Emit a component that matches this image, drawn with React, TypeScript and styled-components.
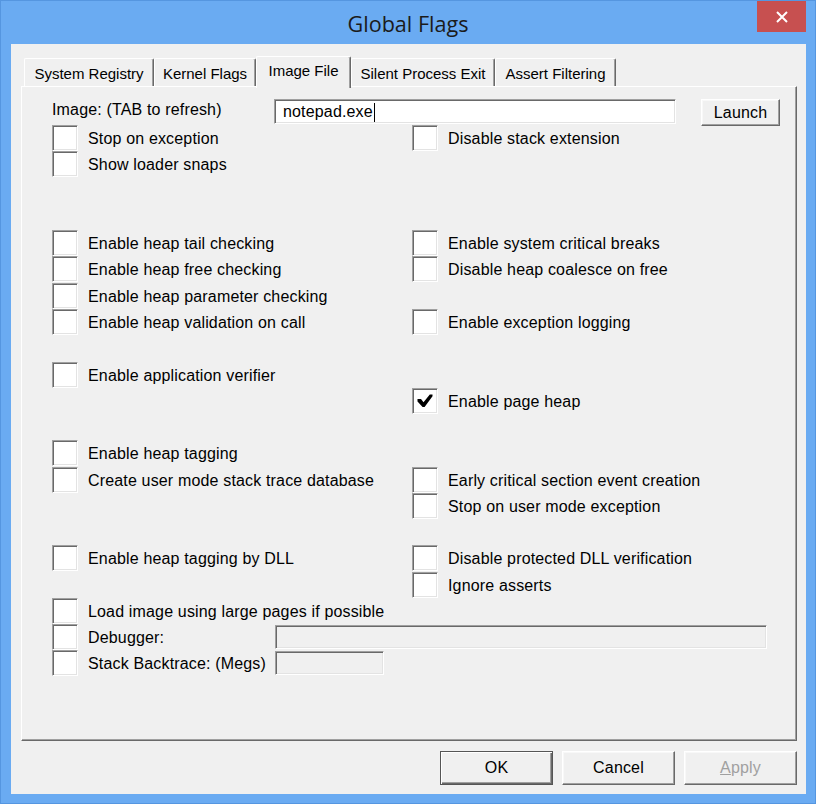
import React from "react";
import styled, { createGlobalStyle, css } from "styled-components";

const GlobalStyle = createGlobalStyle`
  html, body { margin: 0; padding: 0; background: #6aabf2; }
  * { box-sizing: border-box; }
`;

const Window = styled.div`
  width: 816px;
  height: 804px;
  background: #6aabf2;
  border: 1px solid #5596e0;
  display: flex;
  flex-direction: column;
  font-family: "Liberation Sans", Arial, sans-serif;
  font-size: 16px;
  letter-spacing: 0.16px;
  color: #000;
`;

const TitleBar = styled.div`
  height: 43px;
  display: grid;
  grid-template-columns: 1fr auto 1fr;
  align-items: start;
`;

const Title = styled.div`
  grid-column: 2;
  font-family: "Open Sans", "Noto Sans", sans-serif;
  font-size: 21.6px;
  letter-spacing: 0;
  color: #1b1b1b;
  line-height: 43px;
  padding-top: 1px;
`;

const CloseButton = styled.div`
  grid-column: 3;
  justify-self: end;
  margin-right: 9px;
  width: 49px;
  height: 31px;
  background: #c75050;
  display: flex;
  align-items: center;
  justify-content: center;
`;

const Client = styled.div`
  margin: 0 9px 0 10px;
  height: 750px;
  background: #f0f0f0;
  padding: 12px 9px 0 10px;
  display: flex;
  flex-direction: column;
`;

const TabStrip = styled.div`
  height: 30px;
  display: flex;
  align-items: flex-end;
  padding-left: 3px;
  position: relative;
  z-index: 1;
`;

const Tab = styled.div<{ $w: number; $active?: boolean }>`
  width: ${(p) => p.$w}px;
  height: 28px;
  background: #f0f0f0;
  border-top: 1px solid #fff;
  border-left: 1px solid #fff;
  border-right: 1px solid #696969;
  box-shadow: inset -1px 0 #a0a0a0;
  border-top-left-radius: 2px;
  border-top-right-radius: 2px;
  display: flex;
  align-items: center;
  justify-content: center;
  white-space: nowrap;
  font-size: 15px;
  letter-spacing: 0;
  padding-top: 1px;
  ${(p) =>
    p.$active &&
    css`
      height: 32px;
      margin-bottom: -2px;
      padding-top: 0;
      padding-bottom: 4px;
    `}
`;

const Panel = styled.div`
  height: 655px;
  border-top: 1px solid #fff;
  border-left: 1px solid #fff;
  border-right: 1px solid #696969;
  border-bottom: 1px solid #696969;
  box-shadow: inset -1px -1px #a0a0a0;
  padding: 12px 0 0 30px;
  display: flex;
  flex-direction: column;
`;

const ImageRow = styled.div`
  height: 26px;
  display: flex;
  align-items: flex-start;
`;

const ImageLabel = styled.div`
  width: 222px;
  margin-top: 2px;
  white-space: nowrap;
`;

const sunken = css`
  border: 1px solid;
  border-color: #a0a0a0 #fff #fff #a0a0a0;
  box-shadow: inset 1px 1px #696969, inset -1px -1px #e3e3e3;
`;

const TextBox = styled.div<{ $w: number; $disabled?: boolean }>`
  ${sunken};
  width: ${(p) => p.$w}px;
  height: ${(p) => (p.$disabled ? 24 : 25)}px;
  background: ${(p) => (p.$disabled ? "#f0f0f0" : "#fff")};
  padding-left: 8px;
  padding-top: 1px;
  display: flex;
  align-items: center;
  flex-shrink: 0;
`;

const Caret = styled.span`
  display: inline-block;
  width: 1px;
  height: 19px;
  background: #000;
  margin-left: 1px;
`;

const raised = css`
  background: #f0f0f0;
  border: 1px solid;
  border-color: #fff #696969 #696969 #fff;
  box-shadow: inset -1px -1px #a0a0a0, inset 1px 1px #f8f8f8;
  display: flex;
  align-items: center;
  justify-content: center;
`;

const LaunchButton = styled.div`
  ${raised};
  width: 79px;
  height: 27px;
  margin-left: 25px;
`;

const FlagGrid = styled.div`
  display: grid;
  grid-template-columns: 360px 1fr;
  grid-template-rows: repeat(21, 26.28px);
`;

const FlagRow = styled.div<{ $row: number; $col: number; $span?: boolean }>`
  grid-row: ${(p) => p.$row + 1};
  grid-column: ${(p) => (p.$span ? "1 / -1" : p.$col)};
  display: flex;
  align-items: center;
  gap: 10px;
  white-space: nowrap;
`;

const Box = styled.div`
  ${sunken};
  width: 26px;
  height: 26px;
  background: #fff;
  flex-shrink: 0;
  display: flex;
  align-items: center;
  justify-content: center;
`;

const FlagLabel = styled.span<{ $w?: number }>`
  padding-top: 2px;
  ${(p) => p.$w && `width: ${p.$w}px; flex-shrink: 0;`}
`;

const Footer = styled.div`
  display: flex;
  justify-content: flex-end;
  gap: 9px;
  margin-top: 10px;
`;

const DialogButton = styled.div<{ $default?: boolean; $disabled?: boolean }>`
  ${raised};
  width: 113px;
  height: 34px;
  color: ${(p) => (p.$disabled ? "#a0a0a0" : "#000")};
  ${(p) =>
    p.$default &&
    css`
      border-color: #555;
      box-shadow: inset 1px 1px #fff, inset -1px -1px #696969,
        inset -2px -2px #a0a0a0;
    `}
`;

type Flag = { row: number; col: number; label: string; checked?: boolean };

const flags: Flag[] = [
  { row: 0, col: 1, label: "Stop on exception" },
  { row: 0, col: 2, label: "Disable stack extension" },
  { row: 1, col: 1, label: "Show loader snaps" },
  { row: 4, col: 1, label: "Enable heap tail checking" },
  { row: 4, col: 2, label: "Enable system critical breaks" },
  { row: 5, col: 1, label: "Enable heap free checking" },
  { row: 5, col: 2, label: "Disable heap coalesce on free" },
  { row: 6, col: 1, label: "Enable heap parameter checking" },
  { row: 7, col: 1, label: "Enable heap validation on call" },
  { row: 7, col: 2, label: "Enable exception logging" },
  { row: 9, col: 1, label: "Enable application verifier" },
  { row: 10, col: 2, label: "Enable page heap", checked: true },
  { row: 12, col: 1, label: "Enable heap tagging" },
  { row: 13, col: 1, label: "Create user mode stack trace database" },
  { row: 13, col: 2, label: "Early critical section event creation" },
  { row: 14, col: 2, label: "Stop on user mode exception" },
  { row: 16, col: 1, label: "Enable heap tagging by DLL" },
  { row: 16, col: 2, label: "Disable protected DLL verification" },
  { row: 17, col: 2, label: "Ignore asserts" },
  { row: 18, col: 1, label: "Load image using large pages if possible" },
];

const Check = () => (
  <svg width="16" height="14" viewBox="0 0 16 14">
    <path
      d="M0.5 5 L4 5 L6.5 8.3 L12.8 0.5 L15.5 0.5 L15.5 2.2 L7.6 13 L5.6 13 L0.5 7.4 Z"
      fill="#000"
    />
  </svg>
);

const CloseIcon = () => (
  <svg width="12" height="12" viewBox="0 0 12 12">
    <path d="M1 1 L11 11 M11 1 L1 11" stroke="#fff" strokeWidth="2" />
  </svg>
);

export default function App() {
  return (
    <>
      <GlobalStyle />
      <Window>
        <TitleBar>
          <Title>Global Flags</Title>
          <CloseButton>
            <CloseIcon />
          </CloseButton>
        </TitleBar>
        <Client>
          <TabStrip>
            <Tab $w={130}>System Registry</Tab>
            <Tab $w={102}>Kernel Flags</Tab>
            <Tab $w={95} $active>
              Image File
            </Tab>
            <Tab $w={144}>Silent Process Exit</Tab>
            <Tab $w={121}>Assert Filtering</Tab>
          </TabStrip>
          <Panel>
            <ImageRow>
              <ImageLabel>Image: (TAB to refresh)</ImageLabel>
              <TextBox $w={402}>
                notepad.exe
                <Caret />
              </TextBox>
              <LaunchButton>Launch</LaunchButton>
            </ImageRow>
            <FlagGrid>
              {flags.map((f) => (
                <FlagRow key={f.label} $row={f.row} $col={f.col}>
                  <Box>{f.checked && <Check />}</Box>
                  <FlagLabel>{f.label}</FlagLabel>
                </FlagRow>
              ))}
              <FlagRow $row={19} $col={1} $span>
                <Box />
                <FlagLabel $w={177}>Debugger:</FlagLabel>
                <TextBox $w={492} $disabled />
              </FlagRow>
              <FlagRow $row={20} $col={1} $span>
                <Box />
                <FlagLabel $w={177}>Stack Backtrace: (Megs)</FlagLabel>
                <TextBox $w={109} $disabled />
              </FlagRow>
            </FlagGrid>
          </Panel>
          <Footer>
            <DialogButton $default>OK</DialogButton>
            <DialogButton>Cancel</DialogButton>
            <DialogButton $disabled>
              <span>
                <u>A</u>pply
              </span>
            </DialogButton>
          </Footer>
        </Client>
      </Window>
    </>
  );
}
